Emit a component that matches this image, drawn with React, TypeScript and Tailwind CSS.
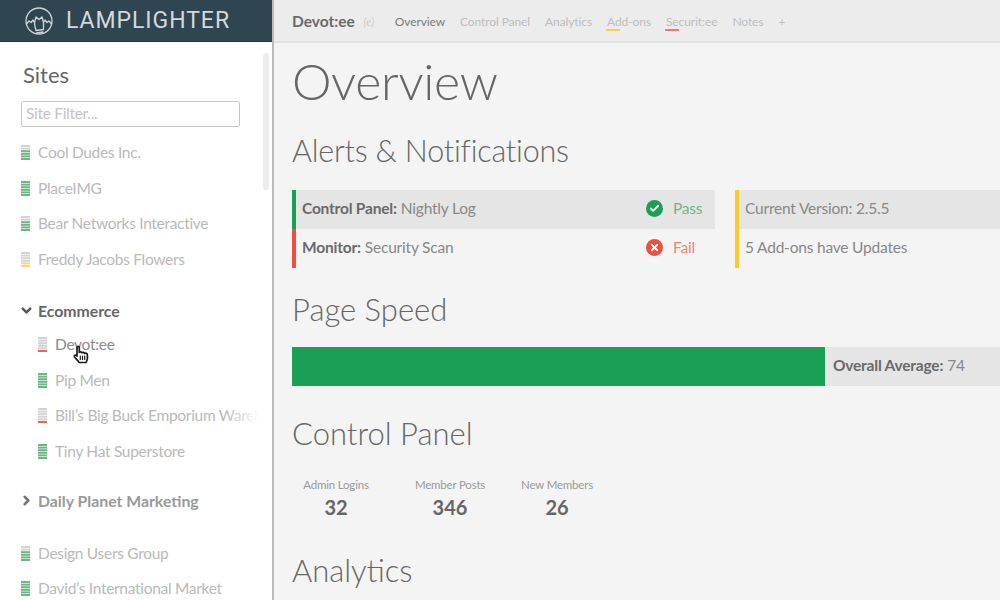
import React from "react";
import { Check, X, ChevronDown, ChevronRight } from "lucide-react";

const G = "#6cb685", Y = "#f6d77a", R = "#f2614a", E = "#d4d4d4";

function Meter({ fill, color }: { fill: number; color: string }) {
  return (
    <svg width="9" height="15" viewBox="0 0 9 15" className="shrink-0">
      {[0, 1, 2, 3, 4, 5].map((i) => (
        <rect key={i} x="0" y={i * 2.6} width="9" height="2" fill={5 - i < fill ? color : E} />
      ))}
    </svg>
  );
}

function Site({ name, fill, color, nested, tone = "text-[#b9b9b9]" }: { name: string; fill: number; color: string; nested?: boolean; tone?: string }) {
  return (
    <div className={`flex items-center h-[35.5px] whitespace-nowrap overflow-hidden gap-[8px] ${nested ? "pl-[17px]" : ""}`}>
      <Meter fill={fill} color={color} />
      <span className={`text-[15.5px] tracking-[-0.3px] ${tone}`}>{name}</span>
    </div>
  );
}

function Logo() {
  return (
    <svg width="28" height="28" viewBox="0 0 28 28" fill="none" stroke="#cfd4d6" strokeWidth="1.3" strokeLinejoin="round" strokeLinecap="round">
      <circle cx="14" cy="14" r="13" />
      <path d="M1.5 17 L4 14 L6 15.5 L8 13 L9.5 15.5 L11 10 L14 12.5 L17 10 L18.5 15.5 L20 13 L22 15.5 L24 14 L26.5 17" />
      <path d="M9.5 15.5 C9.5 19 10.5 21 11 23.5 L18.5 22.5 C18.5 20 18.5 18 18.5 15.5" />
      <path d="M11.5 26 L18 25" />
    </svg>
  );
}

function Hand() {
  return (
    <svg width="16" height="19" viewBox="0 0 16 19" fill="#fff" stroke="#1c1c1c" strokeWidth="1.7" strokeLinejoin="round" strokeLinecap="round">
      <path d="M4 11 L4 2.5 C4 1 6.3 1 6.3 2.5 L6.3 7.5 C7 6.5 8.6 6.6 9 7.8 C9.8 7 11.2 7.2 11.6 8.4 C12.6 7.8 14.4 8.4 14.4 10 L14.4 13.5 C14.4 15 13.5 16 13 17.5 L6 17.5 C5.5 16 3.5 14.5 1.6 12 C0.6 10.5 2.5 9.3 4 11 Z" />
      <path d="M7.3 11 V14.5 M9.5 11 V14.5 M11.7 11 V14.5" strokeWidth="1.2" />
    </svg>
  );
}

function Sidebar() {
  return (
    <aside className="relative w-[274px] shrink-0 h-full bg-white border-r-2 border-[#b9bcbe] flex flex-col overflow-hidden">
      <div className="h-[42px] shrink-0 bg-[#2f4551] border-b border-[#26383f] flex items-center pl-[25px] gap-[13px]">
        <Logo />
        <span className="text-[23px] leading-none tracking-[0.95px] text-[#d5d9db]" style={{ fontFamily: "Roboto, sans-serif" }}>LAMPLIGHTER</span>
      </div>
      <div className="pl-[21px] pr-[12px]">
        <div className="ml-[2px] text-[22px] leading-[28px] text-[#666] mt-[19px]">Sites</div>
        <div className="mt-[12px] w-[219px] h-[26px] border border-[#c8c8c8] rounded-[2px] flex items-center pl-[4px] text-[15.5px] tracking-[-0.3px] text-[#c4c4c4]">Site Filter...</div>
        <div className="mt-[8px]">
          <Site name="Cool Dudes Inc." fill={4} color={G} />
          <Site name="PlaceIMG" fill={6} color={G} />
          <Site name="Bear Networks Interactive" fill={4} color={G} />
          <Site name="Freddy Jacobs Flowers" fill={2} color={Y} />
        </div>
        <div className="flex items-center gap-[4px] mt-[17px] h-[33px] text-[#666] font-bold text-[15.8px]">
          <ChevronDown size={15} strokeWidth={4} color="#555" className="-ml-[2px]" />
          <span>Ecommerce</span>
        </div>
        <div>
          <Site name="Devot:ee" fill={1} color={R} nested tone="text-[#8a8a8a]" />
          <Site name="Pip Men" fill={6} color={G} nested />
          <Site name="Bill’s Big Buck Emporium Warehouse" fill={1} color={R} nested />
          <Site name="Tiny Hat Superstore" fill={6} color={G} nested />
        </div>
        <div className="flex items-center gap-[4px] mt-[14px] h-[35px] text-[#999] font-bold text-[15.8px]">
          <ChevronRight size={15} strokeWidth={4} color="#777" className="-ml-[2px]" />
          <span>Daily Planet Marketing</span>
        </div>
        <div className="mt-[17.5px]">
          <Site name="Design Users Group" fill={4} color={G} />
          <Site name="David’s International Market" fill={6} color={G} />
        </div>
      </div>
      <div className="absolute top-[53px] right-[3px] w-[6px] h-[137px] rounded-full bg-[#ececec]" />
      <div className="absolute top-[403px] right-[12px] w-[36px] h-[26px] bg-gradient-to-r from-white/0 to-white" />
      <div className="absolute top-[345px] left-[73px]"><Hand /></div>
    </aside>
  );
}

function Tab({ label, line, active }: { label: string; line?: string; active?: boolean }) {
  return (
    <span className={`relative text-[12px] tracking-[-0.1px] ${active ? "text-[#7a7a7a]" : "text-[#bdbdbd]"}`}>
      {label}
      {line && <span className={`absolute -left-[1px] top-[16px] w-[14px] h-[2px] ${line}`} />}
    </span>
  );
}

function H2({ children, cls }: { children: React.ReactNode; cls: string }) {
  return <h2 className={`text-[31px] leading-[40px] font-light text-[#666] ${cls}`}>{children}</h2>;
}

function Main() {
  return (
    <main className="flex-1 min-w-0 h-full bg-[#f4f4f4] flex flex-col overflow-hidden">
      <nav className="h-[43px] shrink-0 bg-[#ececec] border-b-2 border-[#e2e2e2] flex items-center pl-[18px] pt-[3px] whitespace-nowrap">
        <span className="text-[15.5px] font-bold text-[#6a6a6a]">Devot:ee</span>
        <span className="ml-[7px] mr-[19px] w-[14px] text-[11px] text-center text-[#cccccc] italic">(e)</span>
        <div className="flex gap-[15px] items-center">
          <Tab label="Overview" active />
          <Tab label="Control Panel" />
          <Tab label="Analytics" />
          <Tab label="Add-ons" line="bg-[#f7cf55]" />
          <Tab label="Securit:ee" line="bg-[#f0796a]" />
          <Tab label="Notes" />
          <Tab label="+" />
        </div>
      </nav>
      <div className="pl-[18px] flex-1 min-h-0">
        <h1 className="text-[50px] leading-[60px] font-light text-[#666] mt-[8px] tracking-[-0.3px]">Overview</h1>
        <H2 cls="mt-[19px] !text-[30.5px] tracking-[-0.2px]">Alerts &amp; Notifications</H2>
        <div className="flex mt-[20px] text-[15.5px] tracking-[-0.2px] text-[#888]">
          <div className="w-[423px] shrink-0">
            <div className="h-[39px] bg-[#e5e5e5] border-l-[4px] border-[#1a9f57] flex items-center pl-[6px] pb-[2px]">
              <b className="font-bold text-[#6a6a6a] mr-[4px]">Control Panel:</b> Nightly Log
              <span className="ml-auto flex items-center w-[69px] text-[#6fb587]">
                <span className="w-[17px] h-[17px] rounded-full bg-[#1a9f57] flex items-center justify-center mr-[10px]"><Check size={11} strokeWidth={4} color="#fff" /></span>Pass
              </span>
            </div>
            <div className="h-[39px] border-l-[4px] border-[#f04e3e] flex items-center pl-[6px] pb-[2px]">
              <b className="font-bold text-[#6a6a6a] mr-[4px]">Monitor:</b> Security Scan
              <span className="ml-auto flex items-center w-[69px] text-[#f5826f]">
                <span className="w-[17px] h-[17px] rounded-full bg-[#f04e3e] flex items-center justify-center mr-[10px]"><X size={11} strokeWidth={4} color="#fff" /></span>Fail
              </span>
            </div>
          </div>
          <div className="flex-1 ml-[20px]">
            <div className="h-[39px] bg-[#e5e5e5] border-l-[4px] border-[#fbcb2e] flex items-center pl-[6px] pb-[2px]">Current Version: 2.5.5</div>
            <div className="h-[39px] border-l-[4px] border-[#fbcb2e] flex items-center pl-[6px] pb-[2px]">5 Add-ons have Updates</div>
          </div>
        </div>
        <H2 cls="mt-[21px]">Page Speed</H2>
        <div className="flex h-[39px] mt-[18px] bg-[#e5e5e5] items-center text-[15.5px] tracking-[-0.2px] text-[#888]">
          <div className="w-[533px] h-full bg-[#1a9f57] mr-[8px]" />
          <b className="font-bold text-[#6a6a6a] mr-[4px] -mt-[2px]">Overall Average:</b> <span className="-mt-[2px]">74</span>
        </div>
        <H2 cls="mt-[27px]">Control Panel</H2>
        <div className="flex mt-[24px] text-center">
          <div className="w-[88px]"><div className="text-[11.5px] tracking-[-0.2px] leading-[16px] text-[#999]">Admin Logins</div><div className="text-[20px] leading-[28px] font-bold text-[#666]">32</div></div>
          <div className="w-[90px] ml-[25px]"><div className="text-[11.5px] tracking-[-0.2px] leading-[16px] text-[#999]">Member Posts</div><div className="text-[20px] leading-[28px] font-bold text-[#666]">346</div></div>
          <div className="w-[90px] ml-[17px]"><div className="text-[11.5px] tracking-[-0.2px] leading-[16px] text-[#999]">New Members</div><div className="text-[20px] leading-[28px] font-bold text-[#666]">26</div></div>
        </div>
        <H2 cls="mt-[29px]">Analytics</H2>
      </div>
    </main>
  );
}

export default function App() {
  return (
    <div className="w-[1000px] h-[600px] flex overflow-hidden" style={{ fontFamily: 'Lato, sans-serif' }}>
      <Sidebar />
      <Main />
    </div>
  );
}
